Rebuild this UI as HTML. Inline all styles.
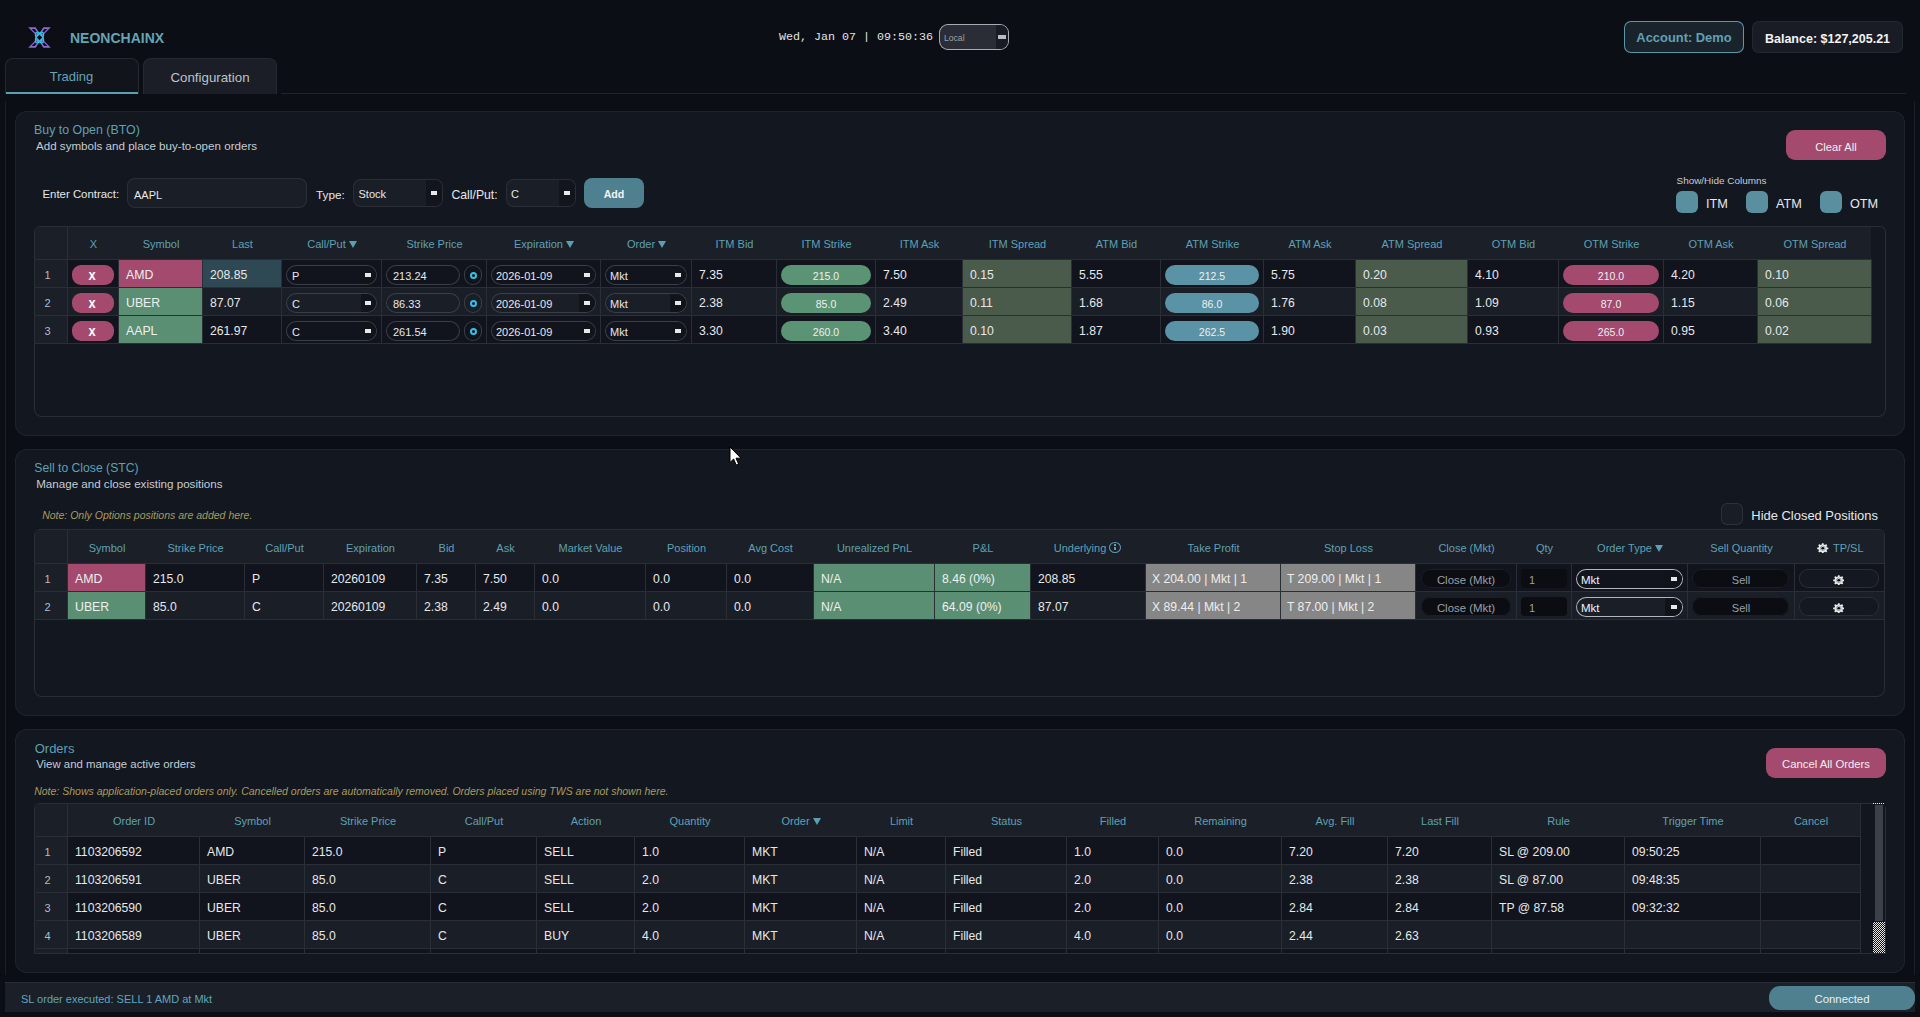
<!DOCTYPE html><html><head><meta charset="utf-8"><style>
html,body{margin:0;padding:0;}
body{width:1920px;height:1017px;overflow:hidden;position:relative;background:#0b0e14;font-family:'Liberation Sans', sans-serif;}
div{position:absolute;box-sizing:border-box;}
.t{line-height:1;white-space:pre;}
</style></head><body>
<svg style="position:absolute;left:28px;top:27px" width="23" height="21" viewBox="0 0 23 21">
<g fill="#8a6cd0" fill-rule="evenodd">
<path d="M0.2 0.3 L7.6 0.3 L12.2 7.2 L9.6 9.8 Z M3.6 1.9 L6.7 1.9 L9.4 5.6 L8.4 6.8 Z"/>
<path d="M22.8 0.3 L15.4 0.3 L10.8 7.2 L13.4 9.8 Z M19.4 1.9 L16.3 1.9 L13.6 5.6 L14.6 6.8 Z"/>
<path d="M0.2 20.7 L7.6 20.7 L12.2 13.8 L9.6 11.2 Z M3.6 19.1 L6.7 19.1 L9.4 15.4 L8.4 14.2 Z"/>
<path d="M22.8 20.7 L15.4 20.7 L10.8 13.8 L13.4 11.2 Z M19.4 19.1 L16.3 19.1 L13.6 15.4 L14.6 14.2 Z"/>
</g>
<g fill="none" stroke="#2ec4e0" stroke-width="1.4">
<ellipse cx="11.5" cy="10.5" rx="2.9" ry="6.0" transform="rotate(33 11.5 10.5)"/>
<ellipse cx="11.5" cy="10.5" rx="2.9" ry="6.0" transform="rotate(-33 11.5 10.5)"/>
</g></svg>
<div class="t" style="top:30.94px;font-size:14px;color:#64a4b4;font-weight:bold;left:70.00px;">NEONCHAINX</div>
<div class="t" style="top:32.28px;font-size:11.67px;color:#e2e4e6;font-family:'Liberation Mono', monospace;left:779.00px;">Wed, Jan 07 | 09:50:36</div>
<div style="left:939px;top:24px;width:70px;height:26px;background:#2a2d35;box-shadow:inset 0 0 0 1px #a8acb4;border-radius:9px;"></div>
<div style="left:996px;top:25px;width:12px;height:24px;background:#181b22;border-radius:0 8px 8px 0;"></div>
<div style="left:998px;top:35px;width:8px;height:4px;background:#b8bcc4;"></div>
<div class="t" style="top:34.07px;font-size:8.6px;color:#9aa2ac;left:944.00px;">Local</div>
<div style="left:1624px;top:21px;width:120px;height:32px;background:#18232b;box-shadow:inset 0 0 0 1px #5b98a8;border-radius:7px;"></div>
<div class="t" style="top:32.30px;font-size:12.9px;color:#62a0b3;font-weight:bold;left:1384.00px;width:600px;text-align:center;">Account: Demo</div>
<div style="left:1752px;top:21px;width:151px;height:32px;background:#191c25;box-shadow:inset 0 0 0 1px #23272f;border-radius:7px;"></div>
<div class="t" style="top:32.50px;font-size:12.5px;color:#f2f2f2;font-weight:bold;left:1527.50px;width:600px;text-align:center;">Balance: $127,205.21</div>
<div style="left:5px;top:58px;width:134px;height:36px;background:#11141b;border-radius:8px 8px 0 0;border:1px solid #252932;border-bottom:none;"></div>
<div style="left:6px;top:92px;width:132px;height:2px;background:#5b9fb4;"></div>
<div class="t" style="top:69.75px;font-size:13px;color:#66a3b6;left:-228.50px;width:600px;text-align:center;">Trading</div>
<div style="left:143px;top:58px;width:134px;height:36px;background:#1b1e27;border-radius:8px 8px 0 0;border:1px solid #252932;border-bottom:none;"></div>
<div class="t" style="top:71.40px;font-size:13.3px;color:#b9c4cc;left:-90.00px;width:600px;text-align:center;">Configuration</div>
<div style="left:281px;top:93px;width:1625px;height:1px;background:#20242c;"></div>
<div style="left:5px;top:101px;width:1px;height:874px;background:#1a1e26;"></div>
<div style="left:1914px;top:101px;width:1px;height:874px;background:#1a1e26;"></div>
<div style="left:15px;top:111px;width:1890px;height:325px;background:#131720;box-shadow:inset 0 0 0 1px #1f232c;border-radius:12px;"></div>
<div class="t" style="top:124.15px;font-size:12.4px;color:#5ea1b3;left:34.00px;">Buy to Open (BTO)</div>
<div class="t" style="top:140.35px;font-size:11.6px;color:#c4ccd4;left:36.00px;">Add symbols and place buy-to-open orders</div>
<div style="left:1786px;top:130px;width:100px;height:30px;background:#a34a6e;border-radius:9px;"></div>
<div class="t" style="top:141.51px;font-size:11.1px;color:#f4eef0;left:1536.00px;width:600px;text-align:center;">Clear All</div>
<div class="t" style="top:176.39px;font-size:9.95px;color:#c4ccd4;left:1676.50px;">Show/Hide Columns</div>
<div style="left:1676px;top:191px;width:22px;height:22px;background:#5a8fa0;border-radius:6px;"></div>
<div class="t" style="top:197.80px;font-size:12.7px;color:#e6e8ea;left:1706.00px;">ITM</div>
<div style="left:1746px;top:191px;width:22px;height:22px;background:#5a8fa0;border-radius:6px;"></div>
<div class="t" style="top:197.80px;font-size:12.7px;color:#e6e8ea;left:1776.00px;">ATM</div>
<div style="left:1820px;top:191px;width:22px;height:22px;background:#5a8fa0;border-radius:6px;"></div>
<div class="t" style="top:197.80px;font-size:12.7px;color:#e6e8ea;left:1850.00px;">OTM</div>
<div class="t" style="top:189.35px;font-size:11.4px;color:#e6e8ea;left:42.50px;">Enter Contract:</div>
<div style="left:127px;top:178px;width:180px;height:30px;background:#1a1e27;box-shadow:inset 0 0 0 1px #2a2e37;border-radius:8px;"></div>
<div class="t" style="top:189.56px;font-size:11px;color:#e6e8ea;left:134.00px;">AAPL</div>
<div class="t" style="top:189.55px;font-size:11.8px;color:#e6e8ea;left:316.00px;">Type:</div>
<div style="left:353px;top:179px;width:90px;height:28px;background:#1a1e27;box-shadow:inset 0 0 0 1px #2a2e37;border-radius:8px;"></div>
<div style="left:426px;top:180px;width:16px;height:26px;background:#12151c;border-radius:0 7px 7px 0;"></div>
<div style="left:431px;top:191px;width:6px;height:4px;background:#e6e8ea;"></div>
<div class="t" style="top:188.86px;font-size:11px;color:#e6e8ea;left:358.50px;">Stock</div>
<div class="t" style="top:189.35px;font-size:12.2px;color:#e6e8ea;left:451.50px;">Call/Put:</div>
<div style="left:506px;top:179px;width:70px;height:28px;background:#1a1e27;box-shadow:inset 0 0 0 1px #2a2e37;border-radius:8px;"></div>
<div style="left:559px;top:180px;width:16px;height:26px;background:#12151c;border-radius:0 7px 7px 0;"></div>
<div style="left:564px;top:191px;width:6px;height:4px;background:#e6e8ea;"></div>
<div class="t" style="top:188.86px;font-size:11px;color:#e6e8ea;left:511.00px;">C</div>
<div style="left:584px;top:178px;width:60px;height:30px;background:#4e808f;border-radius:8px;"></div>
<div class="t" style="top:188.56px;font-size:10.6px;color:#f2f4f6;font-weight:bold;left:314.00px;width:600px;text-align:center;">Add</div>
<div style="left:34px;top:226px;width:1852px;height:191px;background:#131720;box-shadow:inset 0 0 0 1px #2a2e37;border-radius:6px 6px 8px 8px;"></div>
<div style="left:68px;top:227px;width:1803px;height:32px;background:#1b1f28;"></div>
<div style="left:35px;top:227px;width:32px;height:116px;background:#1b1f28;"></div>
<div style="left:68px;top:260px;width:1803px;height:27px;background:#11141d;"></div>
<div style="left:68px;top:288px;width:1803px;height:27px;background:#1a1e27;"></div>
<div style="left:68px;top:316px;width:1803px;height:27px;background:#11141d;"></div>
<div style="left:35px;top:259px;width:1836px;height:1px;background:#2a2e37;"></div>
<div style="left:35px;top:287px;width:1836px;height:1px;background:#2a2e37;"></div>
<div style="left:35px;top:315px;width:1836px;height:1px;background:#2a2e37;"></div>
<div style="left:35px;top:343px;width:1836px;height:1px;background:#2a2e37;"></div>
<div style="left:67px;top:227px;width:1px;height:116px;background:#2a2e37;"></div>
<div style="left:118px;top:259px;width:1px;height:84px;background:#2a2e37;"></div>
<div style="left:202px;top:259px;width:1px;height:84px;background:#2a2e37;"></div>
<div style="left:281px;top:259px;width:1px;height:84px;background:#2a2e37;"></div>
<div style="left:381px;top:259px;width:1px;height:84px;background:#2a2e37;"></div>
<div style="left:486px;top:259px;width:1px;height:84px;background:#2a2e37;"></div>
<div style="left:600px;top:259px;width:1px;height:84px;background:#2a2e37;"></div>
<div style="left:691px;top:259px;width:1px;height:84px;background:#2a2e37;"></div>
<div style="left:776px;top:259px;width:1px;height:84px;background:#2a2e37;"></div>
<div style="left:875px;top:259px;width:1px;height:84px;background:#2a2e37;"></div>
<div style="left:962px;top:259px;width:1px;height:84px;background:#2a2e37;"></div>
<div style="left:1071px;top:259px;width:1px;height:84px;background:#2a2e37;"></div>
<div style="left:1160px;top:259px;width:1px;height:84px;background:#2a2e37;"></div>
<div style="left:1263px;top:259px;width:1px;height:84px;background:#2a2e37;"></div>
<div style="left:1355px;top:259px;width:1px;height:84px;background:#2a2e37;"></div>
<div style="left:1467px;top:259px;width:1px;height:84px;background:#2a2e37;"></div>
<div style="left:1558px;top:259px;width:1px;height:84px;background:#2a2e37;"></div>
<div style="left:1663px;top:259px;width:1px;height:84px;background:#2a2e37;"></div>
<div style="left:1757px;top:259px;width:1px;height:84px;background:#2a2e37;"></div>
<div style="left:1871px;top:259px;width:1px;height:84px;background:#2a2e37;"></div>
<div class="t" style="top:238.76px;font-size:11px;color:#5ea1b3;left:-206.50px;width:600px;text-align:center;">X</div>
<div class="t" style="top:238.76px;font-size:11px;color:#5ea1b3;left:-139.00px;width:600px;text-align:center;">Symbol</div>
<div class="t" style="top:238.76px;font-size:11px;color:#5ea1b3;left:-57.50px;width:600px;text-align:center;">Last</div>
<div class="t" style="top:238.76px;font-size:11px;color:#5ea1b3;left:134.50px;width:600px;text-align:center;">Strike Price</div>
<div class="t" style="top:238.76px;font-size:11px;color:#5ea1b3;left:434.50px;width:600px;text-align:center;">ITM Bid</div>
<div class="t" style="top:238.76px;font-size:11px;color:#5ea1b3;left:526.50px;width:600px;text-align:center;">ITM Strike</div>
<div class="t" style="top:238.76px;font-size:11px;color:#5ea1b3;left:619.50px;width:600px;text-align:center;">ITM Ask</div>
<div class="t" style="top:238.76px;font-size:11px;color:#5ea1b3;left:717.50px;width:600px;text-align:center;">ITM Spread</div>
<div class="t" style="top:238.76px;font-size:11px;color:#5ea1b3;left:816.50px;width:600px;text-align:center;">ATM Bid</div>
<div class="t" style="top:238.76px;font-size:11px;color:#5ea1b3;left:912.50px;width:600px;text-align:center;">ATM Strike</div>
<div class="t" style="top:238.76px;font-size:11px;color:#5ea1b3;left:1010.00px;width:600px;text-align:center;">ATM Ask</div>
<div class="t" style="top:238.76px;font-size:11px;color:#5ea1b3;left:1112.00px;width:600px;text-align:center;">ATM Spread</div>
<div class="t" style="top:238.76px;font-size:11px;color:#5ea1b3;left:1213.50px;width:600px;text-align:center;">OTM Bid</div>
<div class="t" style="top:238.76px;font-size:11px;color:#5ea1b3;left:1311.50px;width:600px;text-align:center;">OTM Strike</div>
<div class="t" style="top:238.76px;font-size:11px;color:#5ea1b3;left:1411.00px;width:600px;text-align:center;">OTM Ask</div>
<div class="t" style="top:238.76px;font-size:11px;color:#5ea1b3;left:1515.00px;width:600px;text-align:center;">OTM Spread</div>
<div class="t" style="top:238.76px;font-size:11px;color:#5ea1b3;left:32.00px;width:600px;text-align:center;">Call/Put<span style="display:inline-block;width:0;height:0;border-left:4px solid transparent;border-right:4px solid transparent;border-top:7.5px solid #5b9fb4;margin-left:3px;vertical-align:0px"></span></div>
<div class="t" style="top:238.76px;font-size:11px;color:#5ea1b3;left:244.00px;width:600px;text-align:center;">Expiration<span style="display:inline-block;width:0;height:0;border-left:4px solid transparent;border-right:4px solid transparent;border-top:7.5px solid #5b9fb4;margin-left:3px;vertical-align:0px"></span></div>
<div class="t" style="top:238.76px;font-size:11px;color:#5ea1b3;left:346.50px;width:600px;text-align:center;">Order<span style="display:inline-block;width:0;height:0;border-left:4px solid transparent;border-right:4px solid transparent;border-top:7.5px solid #5b9fb4;margin-left:3px;vertical-align:0px"></span></div>
<div class="t" style="top:269.96px;font-size:11px;color:#b4bcc4;left:44.50px;">1</div>
<div style="left:72px;top:265px;width:42px;height:20px;background:#a34a6e;border-radius:9px;"></div>
<div class="t" style="top:267.54px;font-size:14px;color:#ffffff;font-weight:bold;left:-207.70px;width:600px;text-align:center;transform:scaleX(0.92);">x</div>
<div style="left:119px;top:260px;width:83px;height:27px;background:#a34a6e;"></div>
<div class="t" style="top:269.30px;font-size:12.3px;color:#eef0f0;left:126.00px;">AMD</div>
<div style="left:203px;top:260px;width:78px;height:27px;background:#2e4954;"></div>
<div class="t" style="top:269.35px;font-size:12.2px;color:#e6e8ea;left:210.00px;">208.85</div>
<div style="left:286px;top:265px;width:91px;height:20px;box-shadow:inset 0 0 0 1px #3a3e47;border-radius:10px;"></div>
<div style="left:361px;top:266px;width:15px;height:18px;background:#11141b;border-radius:0 9px 9px 0;"></div>
<div style="left:365px;top:273px;width:6px;height:4px;background:#e6e8ea;"></div>
<div class="t" style="top:270.86px;font-size:11px;color:#e6e8ea;left:292.00px;">P</div>
<div style="left:386px;top:265px;width:74px;height:20px;box-shadow:inset 0 0 0 1px #3a3e47;border-radius:10px;"></div>
<div class="t" style="top:270.76px;font-size:11px;color:#e6e8ea;left:393.00px;">213.24</div>
<div style="left:464px;top:265px;width:18px;height:20px;box-shadow:inset 0 0 0 1px #3a3e47;border-radius:9px;"></div>
<div style="left:469.5px;top:271.5px;width:7.0px;height:7.0px;border-radius:4px;border:2px solid #38c0e4;"></div>
<div style="left:491px;top:265px;width:105px;height:20px;box-shadow:inset 0 0 0 1px #3a3e47;border-radius:10px;"></div>
<div style="left:579px;top:266px;width:16px;height:18px;background:#11141b;border-radius:0 9px 9px 0;"></div>
<div style="left:584px;top:273px;width:6px;height:4px;background:#e6e8ea;"></div>
<div class="t" style="top:270.86px;font-size:11px;color:#e6e8ea;left:496.00px;">2026-01-09</div>
<div style="left:605px;top:265px;width:82px;height:20px;box-shadow:inset 0 0 0 1px #3a3e47;border-radius:10px;"></div>
<div style="left:670px;top:266px;width:16px;height:18px;background:#11141b;border-radius:0 9px 9px 0;"></div>
<div style="left:675px;top:273px;width:6px;height:4px;background:#e6e8ea;"></div>
<div class="t" style="top:270.86px;font-size:11px;color:#e6e8ea;left:610.00px;">Mkt</div>
<div class="t" style="top:269.35px;font-size:12.2px;color:#e6e8ea;left:699.00px;">7.35</div>
<div style="left:781px;top:265px;width:90px;height:20px;background:#5b9474;border-radius:10px;"></div>
<div class="t" style="top:270.91px;font-size:10.5px;color:#eef0f0;left:526.00px;width:600px;text-align:center;">215.0</div>
<div class="t" style="top:269.35px;font-size:12.2px;color:#e6e8ea;left:883.00px;">7.50</div>
<div style="left:963px;top:260px;width:108px;height:27px;background:#4a5a4b;"></div>
<div class="t" style="top:269.35px;font-size:12.2px;color:#e6e8ea;left:970.00px;">0.15</div>
<div class="t" style="top:269.35px;font-size:12.2px;color:#e6e8ea;left:1079.00px;">5.55</div>
<div style="left:1165px;top:265px;width:94px;height:20px;background:#5a93a5;border-radius:10px;"></div>
<div class="t" style="top:270.91px;font-size:10.5px;color:#eef0f0;left:912.00px;width:600px;text-align:center;">212.5</div>
<div class="t" style="top:269.35px;font-size:12.2px;color:#e6e8ea;left:1271.00px;">5.75</div>
<div style="left:1356px;top:260px;width:111px;height:27px;background:#4a5a4b;"></div>
<div class="t" style="top:269.35px;font-size:12.2px;color:#e6e8ea;left:1363.00px;">0.20</div>
<div class="t" style="top:269.35px;font-size:12.2px;color:#e6e8ea;left:1475.00px;">4.10</div>
<div style="left:1563px;top:265px;width:96px;height:20px;background:#a34a6e;border-radius:10px;"></div>
<div class="t" style="top:270.91px;font-size:10.5px;color:#eef0f0;left:1311.00px;width:600px;text-align:center;">210.0</div>
<div class="t" style="top:269.35px;font-size:12.2px;color:#e6e8ea;left:1671.00px;">4.20</div>
<div style="left:1758px;top:260px;width:113px;height:27px;background:#4a5a4b;"></div>
<div class="t" style="top:269.35px;font-size:12.2px;color:#e6e8ea;left:1765.00px;">0.10</div>
<div class="t" style="top:297.96px;font-size:11px;color:#b4bcc4;left:44.50px;">2</div>
<div style="left:72px;top:293px;width:42px;height:20px;background:#a34a6e;border-radius:9px;"></div>
<div class="t" style="top:295.54px;font-size:14px;color:#ffffff;font-weight:bold;left:-207.70px;width:600px;text-align:center;transform:scaleX(0.92);">x</div>
<div style="left:119px;top:288px;width:83px;height:27px;background:#5b8f73;"></div>
<div class="t" style="top:297.30px;font-size:12.3px;color:#eef0f0;left:126.00px;">UBER</div>
<div class="t" style="top:297.35px;font-size:12.2px;color:#e6e8ea;left:210.00px;">87.07</div>
<div style="left:286px;top:293px;width:91px;height:20px;box-shadow:inset 0 0 0 1px #3a3e47;border-radius:10px;"></div>
<div style="left:361px;top:294px;width:15px;height:18px;background:#11141b;border-radius:0 9px 9px 0;"></div>
<div style="left:365px;top:301px;width:6px;height:4px;background:#e6e8ea;"></div>
<div class="t" style="top:298.86px;font-size:11px;color:#e6e8ea;left:292.00px;">C</div>
<div style="left:386px;top:293px;width:74px;height:20px;box-shadow:inset 0 0 0 1px #3a3e47;border-radius:10px;"></div>
<div class="t" style="top:298.76px;font-size:11px;color:#e6e8ea;left:393.00px;">86.33</div>
<div style="left:464px;top:293px;width:18px;height:20px;box-shadow:inset 0 0 0 1px #3a3e47;border-radius:9px;"></div>
<div style="left:469.5px;top:299.5px;width:7.0px;height:7.0px;border-radius:4px;border:2px solid #38c0e4;"></div>
<div style="left:491px;top:293px;width:105px;height:20px;box-shadow:inset 0 0 0 1px #3a3e47;border-radius:10px;"></div>
<div style="left:579px;top:294px;width:16px;height:18px;background:#11141b;border-radius:0 9px 9px 0;"></div>
<div style="left:584px;top:301px;width:6px;height:4px;background:#e6e8ea;"></div>
<div class="t" style="top:298.86px;font-size:11px;color:#e6e8ea;left:496.00px;">2026-01-09</div>
<div style="left:605px;top:293px;width:82px;height:20px;box-shadow:inset 0 0 0 1px #3a3e47;border-radius:10px;"></div>
<div style="left:670px;top:294px;width:16px;height:18px;background:#11141b;border-radius:0 9px 9px 0;"></div>
<div style="left:675px;top:301px;width:6px;height:4px;background:#e6e8ea;"></div>
<div class="t" style="top:298.86px;font-size:11px;color:#e6e8ea;left:610.00px;">Mkt</div>
<div class="t" style="top:297.35px;font-size:12.2px;color:#e6e8ea;left:699.00px;">2.38</div>
<div style="left:781px;top:293px;width:90px;height:20px;background:#5b9474;border-radius:10px;"></div>
<div class="t" style="top:298.91px;font-size:10.5px;color:#eef0f0;left:526.00px;width:600px;text-align:center;">85.0</div>
<div class="t" style="top:297.35px;font-size:12.2px;color:#e6e8ea;left:883.00px;">2.49</div>
<div style="left:963px;top:288px;width:108px;height:27px;background:#4a5a4b;"></div>
<div class="t" style="top:297.35px;font-size:12.2px;color:#e6e8ea;left:970.00px;">0.11</div>
<div class="t" style="top:297.35px;font-size:12.2px;color:#e6e8ea;left:1079.00px;">1.68</div>
<div style="left:1165px;top:293px;width:94px;height:20px;background:#5a93a5;border-radius:10px;"></div>
<div class="t" style="top:298.91px;font-size:10.5px;color:#eef0f0;left:912.00px;width:600px;text-align:center;">86.0</div>
<div class="t" style="top:297.35px;font-size:12.2px;color:#e6e8ea;left:1271.00px;">1.76</div>
<div style="left:1356px;top:288px;width:111px;height:27px;background:#4a5a4b;"></div>
<div class="t" style="top:297.35px;font-size:12.2px;color:#e6e8ea;left:1363.00px;">0.08</div>
<div class="t" style="top:297.35px;font-size:12.2px;color:#e6e8ea;left:1475.00px;">1.09</div>
<div style="left:1563px;top:293px;width:96px;height:20px;background:#a34a6e;border-radius:10px;"></div>
<div class="t" style="top:298.91px;font-size:10.5px;color:#eef0f0;left:1311.00px;width:600px;text-align:center;">87.0</div>
<div class="t" style="top:297.35px;font-size:12.2px;color:#e6e8ea;left:1671.00px;">1.15</div>
<div style="left:1758px;top:288px;width:113px;height:27px;background:#4a5a4b;"></div>
<div class="t" style="top:297.35px;font-size:12.2px;color:#e6e8ea;left:1765.00px;">0.06</div>
<div class="t" style="top:325.96px;font-size:11px;color:#b4bcc4;left:44.50px;">3</div>
<div style="left:72px;top:321px;width:42px;height:20px;background:#a34a6e;border-radius:9px;"></div>
<div class="t" style="top:323.54px;font-size:14px;color:#ffffff;font-weight:bold;left:-207.70px;width:600px;text-align:center;transform:scaleX(0.92);">x</div>
<div style="left:119px;top:316px;width:83px;height:27px;background:#5b8f73;"></div>
<div class="t" style="top:325.30px;font-size:12.3px;color:#eef0f0;left:126.00px;">AAPL</div>
<div class="t" style="top:325.35px;font-size:12.2px;color:#e6e8ea;left:210.00px;">261.97</div>
<div style="left:286px;top:321px;width:91px;height:20px;box-shadow:inset 0 0 0 1px #3a3e47;border-radius:10px;"></div>
<div style="left:361px;top:322px;width:15px;height:18px;background:#11141b;border-radius:0 9px 9px 0;"></div>
<div style="left:365px;top:329px;width:6px;height:4px;background:#e6e8ea;"></div>
<div class="t" style="top:326.86px;font-size:11px;color:#e6e8ea;left:292.00px;">C</div>
<div style="left:386px;top:321px;width:74px;height:20px;box-shadow:inset 0 0 0 1px #3a3e47;border-radius:10px;"></div>
<div class="t" style="top:326.76px;font-size:11px;color:#e6e8ea;left:393.00px;">261.54</div>
<div style="left:464px;top:321px;width:18px;height:20px;box-shadow:inset 0 0 0 1px #3a3e47;border-radius:9px;"></div>
<div style="left:469.5px;top:327.5px;width:7.0px;height:7.0px;border-radius:4px;border:2px solid #38c0e4;"></div>
<div style="left:491px;top:321px;width:105px;height:20px;box-shadow:inset 0 0 0 1px #3a3e47;border-radius:10px;"></div>
<div style="left:579px;top:322px;width:16px;height:18px;background:#11141b;border-radius:0 9px 9px 0;"></div>
<div style="left:584px;top:329px;width:6px;height:4px;background:#e6e8ea;"></div>
<div class="t" style="top:326.86px;font-size:11px;color:#e6e8ea;left:496.00px;">2026-01-09</div>
<div style="left:605px;top:321px;width:82px;height:20px;box-shadow:inset 0 0 0 1px #3a3e47;border-radius:10px;"></div>
<div style="left:670px;top:322px;width:16px;height:18px;background:#11141b;border-radius:0 9px 9px 0;"></div>
<div style="left:675px;top:329px;width:6px;height:4px;background:#e6e8ea;"></div>
<div class="t" style="top:326.86px;font-size:11px;color:#e6e8ea;left:610.00px;">Mkt</div>
<div class="t" style="top:325.35px;font-size:12.2px;color:#e6e8ea;left:699.00px;">3.30</div>
<div style="left:781px;top:321px;width:90px;height:20px;background:#5b9474;border-radius:10px;"></div>
<div class="t" style="top:326.91px;font-size:10.5px;color:#eef0f0;left:526.00px;width:600px;text-align:center;">260.0</div>
<div class="t" style="top:325.35px;font-size:12.2px;color:#e6e8ea;left:883.00px;">3.40</div>
<div style="left:963px;top:316px;width:108px;height:27px;background:#4a5a4b;"></div>
<div class="t" style="top:325.35px;font-size:12.2px;color:#e6e8ea;left:970.00px;">0.10</div>
<div class="t" style="top:325.35px;font-size:12.2px;color:#e6e8ea;left:1079.00px;">1.87</div>
<div style="left:1165px;top:321px;width:94px;height:20px;background:#5a93a5;border-radius:10px;"></div>
<div class="t" style="top:326.91px;font-size:10.5px;color:#eef0f0;left:912.00px;width:600px;text-align:center;">262.5</div>
<div class="t" style="top:325.35px;font-size:12.2px;color:#e6e8ea;left:1271.00px;">1.90</div>
<div style="left:1356px;top:316px;width:111px;height:27px;background:#4a5a4b;"></div>
<div class="t" style="top:325.35px;font-size:12.2px;color:#e6e8ea;left:1363.00px;">0.03</div>
<div class="t" style="top:325.35px;font-size:12.2px;color:#e6e8ea;left:1475.00px;">0.93</div>
<div style="left:1563px;top:321px;width:96px;height:20px;background:#a34a6e;border-radius:10px;"></div>
<div class="t" style="top:326.91px;font-size:10.5px;color:#eef0f0;left:1311.00px;width:600px;text-align:center;">265.0</div>
<div class="t" style="top:325.35px;font-size:12.2px;color:#e6e8ea;left:1671.00px;">0.95</div>
<div style="left:1758px;top:316px;width:113px;height:27px;background:#4a5a4b;"></div>
<div class="t" style="top:325.35px;font-size:12.2px;color:#e6e8ea;left:1765.00px;">0.02</div>
<div style="left:15px;top:449px;width:1890px;height:267px;background:#131720;box-shadow:inset 0 0 0 1px #1f232c;border-radius:12px;"></div>
<div class="t" style="top:462.35px;font-size:12.2px;color:#5ea1b3;left:34.30px;">Sell to Close (STC)</div>
<div class="t" style="top:478.35px;font-size:11.6px;color:#c4ccd4;left:36.20px;">Manage and close existing positions</div>
<div class="t" style="top:509.91px;font-size:10.5px;color:#a99b5c;font-style:italic;left:42.20px;">Note: Only Options positions are added here.</div>
<div style="left:1721px;top:503px;width:22px;height:22px;background:#191d26;box-shadow:inset 0 0 0 1px #2c3039;border-radius:6px;"></div>
<div class="t" style="top:509.87px;font-size:12.95px;color:#e6e8ea;left:1751.30px;">Hide Closed Positions</div>
<div style="left:34px;top:529px;width:1851px;height:168px;background:#131720;box-shadow:inset 0 0 0 1px #2a2e37;border-radius:6px 6px 8px 8px;"></div>
<div style="left:68px;top:530px;width:1816px;height:33px;background:#1b1f28;"></div>
<div style="left:35px;top:530px;width:32px;height:89px;background:#1b1f28;"></div>
<div style="left:68px;top:564px;width:1816px;height:27px;background:#11141d;"></div>
<div style="left:68px;top:592px;width:1816px;height:27px;background:#1a1e27;"></div>
<div style="left:35px;top:563px;width:1849px;height:1px;background:#2a2e37;"></div>
<div style="left:35px;top:591px;width:1849px;height:1px;background:#2a2e37;"></div>
<div style="left:35px;top:619px;width:1849px;height:1px;background:#2a2e37;"></div>
<div style="left:67px;top:530px;width:1px;height:89px;background:#2a2e37;"></div>
<div style="left:145px;top:563px;width:1px;height:56px;background:#2a2e37;"></div>
<div style="left:244px;top:563px;width:1px;height:56px;background:#2a2e37;"></div>
<div style="left:323px;top:563px;width:1px;height:56px;background:#2a2e37;"></div>
<div style="left:416px;top:563px;width:1px;height:56px;background:#2a2e37;"></div>
<div style="left:475px;top:563px;width:1px;height:56px;background:#2a2e37;"></div>
<div style="left:534px;top:563px;width:1px;height:56px;background:#2a2e37;"></div>
<div style="left:645px;top:563px;width:1px;height:56px;background:#2a2e37;"></div>
<div style="left:726px;top:563px;width:1px;height:56px;background:#2a2e37;"></div>
<div style="left:813px;top:563px;width:1px;height:56px;background:#2a2e37;"></div>
<div style="left:934px;top:563px;width:1px;height:56px;background:#2a2e37;"></div>
<div style="left:1030px;top:563px;width:1px;height:56px;background:#2a2e37;"></div>
<div style="left:1145px;top:563px;width:1px;height:56px;background:#2a2e37;"></div>
<div style="left:1280px;top:563px;width:1px;height:56px;background:#2a2e37;"></div>
<div style="left:1415px;top:563px;width:1px;height:56px;background:#2a2e37;"></div>
<div style="left:1516px;top:563px;width:1px;height:56px;background:#2a2e37;"></div>
<div style="left:1571px;top:563px;width:1px;height:56px;background:#2a2e37;"></div>
<div style="left:1687px;top:563px;width:1px;height:56px;background:#2a2e37;"></div>
<div style="left:1794px;top:563px;width:1px;height:56px;background:#2a2e37;"></div>
<div style="left:1884px;top:563px;width:1px;height:56px;background:#2a2e37;"></div>
<div class="t" style="top:542.66px;font-size:11px;color:#5ea1b3;left:-193.00px;width:600px;text-align:center;">Symbol</div>
<div class="t" style="top:542.66px;font-size:11px;color:#5ea1b3;left:-104.50px;width:600px;text-align:center;">Strike Price</div>
<div class="t" style="top:542.66px;font-size:11px;color:#5ea1b3;left:-15.50px;width:600px;text-align:center;">Call/Put</div>
<div class="t" style="top:542.66px;font-size:11px;color:#5ea1b3;left:70.50px;width:600px;text-align:center;">Expiration</div>
<div class="t" style="top:542.66px;font-size:11px;color:#5ea1b3;left:146.50px;width:600px;text-align:center;">Bid</div>
<div class="t" style="top:542.66px;font-size:11px;color:#5ea1b3;left:205.50px;width:600px;text-align:center;">Ask</div>
<div class="t" style="top:542.66px;font-size:11px;color:#5ea1b3;left:290.50px;width:600px;text-align:center;">Market Value</div>
<div class="t" style="top:542.66px;font-size:11px;color:#5ea1b3;left:386.50px;width:600px;text-align:center;">Position</div>
<div class="t" style="top:542.66px;font-size:11px;color:#5ea1b3;left:470.50px;width:600px;text-align:center;">Avg Cost</div>
<div class="t" style="top:542.66px;font-size:11px;color:#5ea1b3;left:574.50px;width:600px;text-align:center;">Unrealized PnL</div>
<div class="t" style="top:542.66px;font-size:11px;color:#5ea1b3;left:683.00px;width:600px;text-align:center;">P&amp;L</div>
<div class="t" style="top:542.66px;font-size:11px;color:#5ea1b3;left:913.50px;width:600px;text-align:center;">Take Profit</div>
<div class="t" style="top:542.66px;font-size:11px;color:#5ea1b3;left:1048.50px;width:600px;text-align:center;">Stop Loss</div>
<div class="t" style="top:542.66px;font-size:11px;color:#5ea1b3;left:1166.50px;width:600px;text-align:center;">Close (Mkt)</div>
<div class="t" style="top:542.66px;font-size:11px;color:#5ea1b3;left:1244.50px;width:600px;text-align:center;">Qty</div>
<div class="t" style="top:542.66px;font-size:11px;color:#5ea1b3;left:1441.50px;width:600px;text-align:center;">Sell Quantity</div>
<div class="t" style="top:541.86px;font-size:11px;color:#5ea1b3;left:787.50px;width:600px;text-align:center;">Underlying<span style="display:inline-block;width:12px;height:11px;border:1.6px solid #5b9fb4;border-radius:50%;margin-left:3px;vertical-align:-1px;box-sizing:border-box;position:relative"><span style="position:absolute;left:3.6px;top:1.6px;width:1.8px;height:1.6px;background:#5b9fb4"></span><span style="position:absolute;left:3.6px;top:3.8px;width:1.8px;height:3.6px;background:#5b9fb4"></span></span></div>
<div class="t" style="top:542.66px;font-size:11px;color:#5ea1b3;left:1330.00px;width:600px;text-align:center;">Order Type<span style="display:inline-block;width:0;height:0;border-left:4px solid transparent;border-right:4px solid transparent;border-top:7.5px solid #5b9fb4;margin-left:3px;vertical-align:0px"></span></div>
<svg style="position:absolute;left:1817px;top:542.5px" width="11.5" height="10.6" viewBox="0 0 12 12" preserveAspectRatio="none"><g fill="#e8eaec"><rect x="5" y="0.2" width="2" height="3" rx="0.3" transform="rotate(0 6 6)"/><rect x="5" y="0.2" width="2" height="3" rx="0.3" transform="rotate(45 6 6)"/><rect x="5" y="0.2" width="2" height="3" rx="0.3" transform="rotate(90 6 6)"/><rect x="5" y="0.2" width="2" height="3" rx="0.3" transform="rotate(135 6 6)"/><rect x="5" y="0.2" width="2" height="3" rx="0.3" transform="rotate(180 6 6)"/><rect x="5" y="0.2" width="2" height="3" rx="0.3" transform="rotate(225 6 6)"/><rect x="5" y="0.2" width="2" height="3" rx="0.3" transform="rotate(270 6 6)"/><rect x="5" y="0.2" width="2" height="3" rx="0.3" transform="rotate(315 6 6)"/><circle cx="6" cy="6" r="4.4"/></g><circle cx="6" cy="6" r="2.5" fill="none" stroke="#8e9296" stroke-width="0.9"/><circle cx="6" cy="6" r="1.5" fill="#0a0a0a"/></svg>
<div class="t" style="top:542.66px;font-size:11px;color:#5ea1b3;left:1833.00px;">TP/SL</div>
<div class="t" style="top:573.96px;font-size:11px;color:#b4bcc4;left:44.50px;">1</div>
<div style="left:68px;top:564px;width:77px;height:27px;background:#a34a6e;"></div>
<div class="t" style="top:573.30px;font-size:12.3px;color:#eef0f0;left:75.00px;">AMD</div>
<div class="t" style="top:573.35px;font-size:12.2px;color:#e6e8ea;left:153.00px;">215.0</div>
<div class="t" style="top:573.35px;font-size:12.2px;color:#e6e8ea;left:252.00px;">P</div>
<div class="t" style="top:573.35px;font-size:12.2px;color:#e6e8ea;left:331.00px;">20260109</div>
<div class="t" style="top:573.35px;font-size:12.2px;color:#e6e8ea;left:424.00px;">7.35</div>
<div class="t" style="top:573.35px;font-size:12.2px;color:#e6e8ea;left:483.00px;">7.50</div>
<div class="t" style="top:573.35px;font-size:12.2px;color:#e6e8ea;left:542.00px;">0.0</div>
<div class="t" style="top:573.35px;font-size:12.2px;color:#e6e8ea;left:653.00px;">0.0</div>
<div class="t" style="top:573.35px;font-size:12.2px;color:#e6e8ea;left:734.00px;">0.0</div>
<div style="left:814px;top:564px;width:120px;height:27px;background:#5b8f73;"></div>
<div class="t" style="top:573.35px;font-size:12.2px;color:#eef0f0;left:821.00px;">N/A</div>
<div style="left:935px;top:564px;width:95px;height:27px;background:#5b8f73;"></div>
<div class="t" style="top:573.35px;font-size:12.2px;color:#eef0f0;left:942.00px;">8.46 (0%)</div>
<div class="t" style="top:573.35px;font-size:12.2px;color:#e6e8ea;left:1038.00px;">208.85</div>
<div style="left:1146px;top:564px;width:134px;height:27px;background:#868686;"></div>
<div class="t" style="top:573.35px;font-size:12.2px;color:#eceeee;left:1152.00px;">X 204.00 | Mkt | 1</div>
<div style="left:1281px;top:564px;width:134px;height:27px;background:#868686;"></div>
<div class="t" style="top:573.35px;font-size:12.2px;color:#eceeee;left:1287.00px;">T 209.00 | Mkt | 1</div>
<div style="left:1421px;top:569px;width:90px;height:19px;background:#0b0d12;box-shadow:inset 0 0 0 1px #1a1e26;border-radius:9px;"></div>
<div class="t" style="top:574.75px;font-size:11.4px;color:#9aa0a8;left:1166.00px;width:600px;text-align:center;">Close (Mkt)</div>
<div style="left:1521px;top:569px;width:46px;height:19px;background:#0b0d12;border-radius:4px;"></div>
<div class="t" style="top:575.16px;font-size:11px;color:#9aa0a8;left:1529.00px;">1</div>
<div style="left:1576px;top:569px;width:107px;height:20px;box-shadow:inset 0 0 0 1px #b0b4bc;border-radius:10px;"></div>
<div style="left:1665px;top:570px;width:17px;height:18px;background:#10131a;border-radius:0 9px 9px 0;"></div>
<div style="left:1671px;top:577px;width:6px;height:4px;background:#e6e8ea;"></div>
<div class="t" style="top:574.60px;font-size:11.5px;color:#f2f4f6;left:1581.00px;">Mkt</div>
<div style="left:1692px;top:569px;width:97px;height:19px;background:#0b0d12;box-shadow:inset 0 0 0 1px #1a1e26;border-radius:9px;"></div>
<div class="t" style="top:575.16px;font-size:11px;color:#9aa0a8;left:1441.00px;width:600px;text-align:center;">Sell</div>
<div style="left:1799px;top:569px;width:80px;height:19px;background:#141820;box-shadow:inset 0 0 0 1px #2a2e37;border-radius:9px;"></div>
<svg style="position:absolute;left:1832.5px;top:574.5px" width="11.5" height="10.6" viewBox="0 0 12 12" preserveAspectRatio="none"><g fill="#e6e8ea"><rect x="5" y="0.2" width="2" height="3" rx="0.3" transform="rotate(0 6 6)"/><rect x="5" y="0.2" width="2" height="3" rx="0.3" transform="rotate(45 6 6)"/><rect x="5" y="0.2" width="2" height="3" rx="0.3" transform="rotate(90 6 6)"/><rect x="5" y="0.2" width="2" height="3" rx="0.3" transform="rotate(135 6 6)"/><rect x="5" y="0.2" width="2" height="3" rx="0.3" transform="rotate(180 6 6)"/><rect x="5" y="0.2" width="2" height="3" rx="0.3" transform="rotate(225 6 6)"/><rect x="5" y="0.2" width="2" height="3" rx="0.3" transform="rotate(270 6 6)"/><rect x="5" y="0.2" width="2" height="3" rx="0.3" transform="rotate(315 6 6)"/><circle cx="6" cy="6" r="4.4"/></g><circle cx="6" cy="6" r="2.5" fill="none" stroke="#8e9296" stroke-width="0.9"/><circle cx="6" cy="6" r="1.5" fill="#0a0a0a"/></svg>
<div class="t" style="top:601.96px;font-size:11px;color:#b4bcc4;left:44.50px;">2</div>
<div style="left:68px;top:592px;width:77px;height:27px;background:#5b8f73;"></div>
<div class="t" style="top:601.30px;font-size:12.3px;color:#eef0f0;left:75.00px;">UBER</div>
<div class="t" style="top:601.35px;font-size:12.2px;color:#e6e8ea;left:153.00px;">85.0</div>
<div class="t" style="top:601.35px;font-size:12.2px;color:#e6e8ea;left:252.00px;">C</div>
<div class="t" style="top:601.35px;font-size:12.2px;color:#e6e8ea;left:331.00px;">20260109</div>
<div class="t" style="top:601.35px;font-size:12.2px;color:#e6e8ea;left:424.00px;">2.38</div>
<div class="t" style="top:601.35px;font-size:12.2px;color:#e6e8ea;left:483.00px;">2.49</div>
<div class="t" style="top:601.35px;font-size:12.2px;color:#e6e8ea;left:542.00px;">0.0</div>
<div class="t" style="top:601.35px;font-size:12.2px;color:#e6e8ea;left:653.00px;">0.0</div>
<div class="t" style="top:601.35px;font-size:12.2px;color:#e6e8ea;left:734.00px;">0.0</div>
<div style="left:814px;top:592px;width:120px;height:27px;background:#5b8f73;"></div>
<div class="t" style="top:601.35px;font-size:12.2px;color:#eef0f0;left:821.00px;">N/A</div>
<div style="left:935px;top:592px;width:95px;height:27px;background:#5b8f73;"></div>
<div class="t" style="top:601.35px;font-size:12.2px;color:#eef0f0;left:942.00px;">64.09 (0%)</div>
<div class="t" style="top:601.35px;font-size:12.2px;color:#e6e8ea;left:1038.00px;">87.07</div>
<div style="left:1146px;top:592px;width:134px;height:27px;background:#868686;"></div>
<div class="t" style="top:601.35px;font-size:12.2px;color:#eceeee;left:1152.00px;">X 89.44 | Mkt | 2</div>
<div style="left:1281px;top:592px;width:134px;height:27px;background:#868686;"></div>
<div class="t" style="top:601.35px;font-size:12.2px;color:#eceeee;left:1287.00px;">T 87.00 | Mkt | 2</div>
<div style="left:1421px;top:597px;width:90px;height:19px;background:#0b0d12;box-shadow:inset 0 0 0 1px #1a1e26;border-radius:9px;"></div>
<div class="t" style="top:602.75px;font-size:11.4px;color:#9aa0a8;left:1166.00px;width:600px;text-align:center;">Close (Mkt)</div>
<div style="left:1521px;top:597px;width:46px;height:19px;background:#0b0d12;border-radius:4px;"></div>
<div class="t" style="top:603.16px;font-size:11px;color:#9aa0a8;left:1529.00px;">1</div>
<div style="left:1576px;top:597px;width:107px;height:20px;box-shadow:inset 0 0 0 1px #b0b4bc;border-radius:10px;"></div>
<div style="left:1665px;top:598px;width:17px;height:18px;background:#10131a;border-radius:0 9px 9px 0;"></div>
<div style="left:1671px;top:605px;width:6px;height:4px;background:#e6e8ea;"></div>
<div class="t" style="top:602.60px;font-size:11.5px;color:#f2f4f6;left:1581.00px;">Mkt</div>
<div style="left:1692px;top:597px;width:97px;height:19px;background:#0b0d12;box-shadow:inset 0 0 0 1px #1a1e26;border-radius:9px;"></div>
<div class="t" style="top:603.16px;font-size:11px;color:#9aa0a8;left:1441.00px;width:600px;text-align:center;">Sell</div>
<div style="left:1799px;top:597px;width:80px;height:19px;background:#141820;box-shadow:inset 0 0 0 1px #2a2e37;border-radius:9px;"></div>
<svg style="position:absolute;left:1832.5px;top:602.5px" width="11.5" height="10.6" viewBox="0 0 12 12" preserveAspectRatio="none"><g fill="#e6e8ea"><rect x="5" y="0.2" width="2" height="3" rx="0.3" transform="rotate(0 6 6)"/><rect x="5" y="0.2" width="2" height="3" rx="0.3" transform="rotate(45 6 6)"/><rect x="5" y="0.2" width="2" height="3" rx="0.3" transform="rotate(90 6 6)"/><rect x="5" y="0.2" width="2" height="3" rx="0.3" transform="rotate(135 6 6)"/><rect x="5" y="0.2" width="2" height="3" rx="0.3" transform="rotate(180 6 6)"/><rect x="5" y="0.2" width="2" height="3" rx="0.3" transform="rotate(225 6 6)"/><rect x="5" y="0.2" width="2" height="3" rx="0.3" transform="rotate(270 6 6)"/><rect x="5" y="0.2" width="2" height="3" rx="0.3" transform="rotate(315 6 6)"/><circle cx="6" cy="6" r="4.4"/></g><circle cx="6" cy="6" r="2.5" fill="none" stroke="#8e9296" stroke-width="0.9"/><circle cx="6" cy="6" r="1.5" fill="#0a0a0a"/></svg>
<div style="left:15px;top:729px;width:1890px;height:244px;background:#131720;box-shadow:inset 0 0 0 1px #1f232c;border-radius:12px;"></div>
<div class="t" style="top:742.05px;font-size:13.0px;color:#5ea1b3;left:34.70px;">Orders</div>
<div class="t" style="top:759.25px;font-size:11.4px;color:#c4ccd4;left:36.20px;">View and manage active orders</div>
<div class="t" style="top:785.91px;font-size:10.5px;color:#a99b5c;font-style:italic;left:34.20px;">Note: Shows application-placed orders only. Cancelled orders are automatically removed. Orders placed using TWS are not shown here.</div>
<div style="left:1766px;top:748px;width:120px;height:30px;background:#a34a6e;border-radius:9px;"></div>
<div class="t" style="top:759.20px;font-size:11.3px;color:#f4eef0;left:1526.00px;width:600px;text-align:center;">Cancel All Orders</div>
<div style="left:34px;top:803px;width:1852px;height:151px;background:#131720;box-shadow:inset 0 0 0 1px #2a2e37;border-radius:6px 6px 0 0;border-bottom:none;"></div>
<div style="left:1861px;top:804px;width:24px;height:149px;background:#12161e;"></div>
<div style="left:36px;top:804px;width:1824px;height:32px;background:#1b1f28;"></div>
<div style="left:35px;top:804px;width:32px;height:150px;background:#1b1f28;"></div>
<div style="left:68px;top:837px;width:1792px;height:27px;background:#11141d;"></div>
<div style="left:68px;top:865px;width:1792px;height:27px;background:#1a1e27;"></div>
<div style="left:68px;top:893px;width:1792px;height:27px;background:#11141d;"></div>
<div style="left:68px;top:921px;width:1792px;height:27px;background:#1a1e27;"></div>
<div style="left:68px;top:949px;width:1792px;height:5px;background:#11141d;"></div>
<div style="left:36px;top:836px;width:1824px;height:1px;background:#2a2e37;"></div>
<div style="left:36px;top:864px;width:1824px;height:1px;background:#2a2e37;"></div>
<div style="left:36px;top:892px;width:1824px;height:1px;background:#2a2e37;"></div>
<div style="left:36px;top:920px;width:1824px;height:1px;background:#2a2e37;"></div>
<div style="left:36px;top:948px;width:1824px;height:1px;background:#2a2e37;"></div>
<div style="left:36px;top:953px;width:1850px;height:1px;background:#2a2e37;"></div>
<div style="left:67px;top:804px;width:1px;height:150px;background:#2a2e37;"></div>
<div style="left:199px;top:836px;width:1px;height:118px;background:#2a2e37;"></div>
<div style="left:304px;top:836px;width:1px;height:118px;background:#2a2e37;"></div>
<div style="left:430px;top:836px;width:1px;height:118px;background:#2a2e37;"></div>
<div style="left:536px;top:836px;width:1px;height:118px;background:#2a2e37;"></div>
<div style="left:634px;top:836px;width:1px;height:118px;background:#2a2e37;"></div>
<div style="left:744px;top:836px;width:1px;height:118px;background:#2a2e37;"></div>
<div style="left:856px;top:836px;width:1px;height:118px;background:#2a2e37;"></div>
<div style="left:945px;top:836px;width:1px;height:118px;background:#2a2e37;"></div>
<div style="left:1066px;top:836px;width:1px;height:118px;background:#2a2e37;"></div>
<div style="left:1158px;top:836px;width:1px;height:118px;background:#2a2e37;"></div>
<div style="left:1281px;top:836px;width:1px;height:118px;background:#2a2e37;"></div>
<div style="left:1387px;top:836px;width:1px;height:118px;background:#2a2e37;"></div>
<div style="left:1491px;top:836px;width:1px;height:118px;background:#2a2e37;"></div>
<div style="left:1624px;top:836px;width:1px;height:118px;background:#2a2e37;"></div>
<div style="left:1760px;top:836px;width:1px;height:118px;background:#2a2e37;"></div>
<div style="left:1860px;top:836px;width:1px;height:118px;background:#2a2e37;"></div>
<div style="left:1860px;top:804px;width:1px;height:150px;background:#2a2e37;"></div>
<div style="left:1875px;top:805px;width:8px;height:116px;background:#3c4049;"></div>
<div style="left:1873px;top:922px;width:12px;height:31px;background:repeating-conic-gradient(#e8e8e8 0 25%, #101010 0 50%) 0 0/2px 2px;"></div>
<div style="left:1873px;top:803px;width:12px;height:1px;background:repeating-linear-gradient(90deg,#e8e8e8 0 1px,transparent 1px 2px)"></div>
<div class="t" style="top:816.46px;font-size:11px;color:#5ea1b3;left:-166.00px;width:600px;text-align:center;">Order ID</div>
<div class="t" style="top:816.46px;font-size:11px;color:#5ea1b3;left:-47.50px;width:600px;text-align:center;">Symbol</div>
<div class="t" style="top:816.46px;font-size:11px;color:#5ea1b3;left:68.00px;width:600px;text-align:center;">Strike Price</div>
<div class="t" style="top:816.46px;font-size:11px;color:#5ea1b3;left:184.00px;width:600px;text-align:center;">Call/Put</div>
<div class="t" style="top:816.46px;font-size:11px;color:#5ea1b3;left:286.00px;width:600px;text-align:center;">Action</div>
<div class="t" style="top:816.46px;font-size:11px;color:#5ea1b3;left:390.00px;width:600px;text-align:center;">Quantity</div>
<div class="t" style="top:816.46px;font-size:11px;color:#5ea1b3;left:601.50px;width:600px;text-align:center;">Limit</div>
<div class="t" style="top:816.46px;font-size:11px;color:#5ea1b3;left:706.50px;width:600px;text-align:center;">Status</div>
<div class="t" style="top:816.46px;font-size:11px;color:#5ea1b3;left:813.00px;width:600px;text-align:center;">Filled</div>
<div class="t" style="top:816.46px;font-size:11px;color:#5ea1b3;left:920.50px;width:600px;text-align:center;">Remaining</div>
<div class="t" style="top:816.46px;font-size:11px;color:#5ea1b3;left:1035.00px;width:600px;text-align:center;">Avg. Fill</div>
<div class="t" style="top:816.46px;font-size:11px;color:#5ea1b3;left:1140.00px;width:600px;text-align:center;">Last Fill</div>
<div class="t" style="top:816.46px;font-size:11px;color:#5ea1b3;left:1258.50px;width:600px;text-align:center;">Rule</div>
<div class="t" style="top:816.46px;font-size:11px;color:#5ea1b3;left:1393.00px;width:600px;text-align:center;">Trigger Time</div>
<div class="t" style="top:816.46px;font-size:11px;color:#5ea1b3;left:1511.00px;width:600px;text-align:center;">Cancel</div>
<div class="t" style="top:816.46px;font-size:11px;color:#5ea1b3;left:501.00px;width:600px;text-align:center;">Order<span style="display:inline-block;width:0;height:0;border-left:4px solid transparent;border-right:4px solid transparent;border-top:7.5px solid #5b9fb4;margin-left:3px;vertical-align:0px"></span></div>
<div class="t" style="top:846.96px;font-size:11px;color:#b4bcc4;left:44.50px;">1</div>
<div class="t" style="top:846.35px;font-size:12.2px;color:#e6e8ea;left:75.00px;">1103206592</div>
<div class="t" style="top:846.35px;font-size:12.2px;color:#e6e8ea;left:207.00px;">AMD</div>
<div class="t" style="top:846.35px;font-size:12.2px;color:#e6e8ea;left:312.00px;">215.0</div>
<div class="t" style="top:846.35px;font-size:12.2px;color:#e6e8ea;left:438.00px;">P</div>
<div class="t" style="top:846.35px;font-size:12.2px;color:#e6e8ea;left:544.00px;">SELL</div>
<div class="t" style="top:846.35px;font-size:12.2px;color:#e6e8ea;left:642.00px;">1.0</div>
<div class="t" style="top:846.35px;font-size:12.2px;color:#e6e8ea;left:752.00px;">MKT</div>
<div class="t" style="top:846.35px;font-size:12.2px;color:#e6e8ea;left:864.00px;">N/A</div>
<div class="t" style="top:846.35px;font-size:12.2px;color:#e6e8ea;left:953.00px;">Filled</div>
<div class="t" style="top:846.35px;font-size:12.2px;color:#e6e8ea;left:1074.00px;">1.0</div>
<div class="t" style="top:846.35px;font-size:12.2px;color:#e6e8ea;left:1166.00px;">0.0</div>
<div class="t" style="top:846.35px;font-size:12.2px;color:#e6e8ea;left:1289.00px;">7.20</div>
<div class="t" style="top:846.35px;font-size:12.2px;color:#e6e8ea;left:1395.00px;">7.20</div>
<div class="t" style="top:846.35px;font-size:12.2px;color:#e6e8ea;left:1499.00px;">SL @ 209.00</div>
<div class="t" style="top:846.35px;font-size:12.2px;color:#e6e8ea;left:1632.00px;">09:50:25</div>
<div class="t" style="top:874.96px;font-size:11px;color:#b4bcc4;left:44.50px;">2</div>
<div class="t" style="top:874.35px;font-size:12.2px;color:#e6e8ea;left:75.00px;">1103206591</div>
<div class="t" style="top:874.35px;font-size:12.2px;color:#e6e8ea;left:207.00px;">UBER</div>
<div class="t" style="top:874.35px;font-size:12.2px;color:#e6e8ea;left:312.00px;">85.0</div>
<div class="t" style="top:874.35px;font-size:12.2px;color:#e6e8ea;left:438.00px;">C</div>
<div class="t" style="top:874.35px;font-size:12.2px;color:#e6e8ea;left:544.00px;">SELL</div>
<div class="t" style="top:874.35px;font-size:12.2px;color:#e6e8ea;left:642.00px;">2.0</div>
<div class="t" style="top:874.35px;font-size:12.2px;color:#e6e8ea;left:752.00px;">MKT</div>
<div class="t" style="top:874.35px;font-size:12.2px;color:#e6e8ea;left:864.00px;">N/A</div>
<div class="t" style="top:874.35px;font-size:12.2px;color:#e6e8ea;left:953.00px;">Filled</div>
<div class="t" style="top:874.35px;font-size:12.2px;color:#e6e8ea;left:1074.00px;">2.0</div>
<div class="t" style="top:874.35px;font-size:12.2px;color:#e6e8ea;left:1166.00px;">0.0</div>
<div class="t" style="top:874.35px;font-size:12.2px;color:#e6e8ea;left:1289.00px;">2.38</div>
<div class="t" style="top:874.35px;font-size:12.2px;color:#e6e8ea;left:1395.00px;">2.38</div>
<div class="t" style="top:874.35px;font-size:12.2px;color:#e6e8ea;left:1499.00px;">SL @ 87.00</div>
<div class="t" style="top:874.35px;font-size:12.2px;color:#e6e8ea;left:1632.00px;">09:48:35</div>
<div class="t" style="top:902.96px;font-size:11px;color:#b4bcc4;left:44.50px;">3</div>
<div class="t" style="top:902.35px;font-size:12.2px;color:#e6e8ea;left:75.00px;">1103206590</div>
<div class="t" style="top:902.35px;font-size:12.2px;color:#e6e8ea;left:207.00px;">UBER</div>
<div class="t" style="top:902.35px;font-size:12.2px;color:#e6e8ea;left:312.00px;">85.0</div>
<div class="t" style="top:902.35px;font-size:12.2px;color:#e6e8ea;left:438.00px;">C</div>
<div class="t" style="top:902.35px;font-size:12.2px;color:#e6e8ea;left:544.00px;">SELL</div>
<div class="t" style="top:902.35px;font-size:12.2px;color:#e6e8ea;left:642.00px;">2.0</div>
<div class="t" style="top:902.35px;font-size:12.2px;color:#e6e8ea;left:752.00px;">MKT</div>
<div class="t" style="top:902.35px;font-size:12.2px;color:#e6e8ea;left:864.00px;">N/A</div>
<div class="t" style="top:902.35px;font-size:12.2px;color:#e6e8ea;left:953.00px;">Filled</div>
<div class="t" style="top:902.35px;font-size:12.2px;color:#e6e8ea;left:1074.00px;">2.0</div>
<div class="t" style="top:902.35px;font-size:12.2px;color:#e6e8ea;left:1166.00px;">0.0</div>
<div class="t" style="top:902.35px;font-size:12.2px;color:#e6e8ea;left:1289.00px;">2.84</div>
<div class="t" style="top:902.35px;font-size:12.2px;color:#e6e8ea;left:1395.00px;">2.84</div>
<div class="t" style="top:902.35px;font-size:12.2px;color:#e6e8ea;left:1499.00px;">TP @ 87.58</div>
<div class="t" style="top:902.35px;font-size:12.2px;color:#e6e8ea;left:1632.00px;">09:32:32</div>
<div class="t" style="top:930.96px;font-size:11px;color:#b4bcc4;left:44.50px;">4</div>
<div class="t" style="top:930.35px;font-size:12.2px;color:#e6e8ea;left:75.00px;">1103206589</div>
<div class="t" style="top:930.35px;font-size:12.2px;color:#e6e8ea;left:207.00px;">UBER</div>
<div class="t" style="top:930.35px;font-size:12.2px;color:#e6e8ea;left:312.00px;">85.0</div>
<div class="t" style="top:930.35px;font-size:12.2px;color:#e6e8ea;left:438.00px;">C</div>
<div class="t" style="top:930.35px;font-size:12.2px;color:#e6e8ea;left:544.00px;">BUY</div>
<div class="t" style="top:930.35px;font-size:12.2px;color:#e6e8ea;left:642.00px;">4.0</div>
<div class="t" style="top:930.35px;font-size:12.2px;color:#e6e8ea;left:752.00px;">MKT</div>
<div class="t" style="top:930.35px;font-size:12.2px;color:#e6e8ea;left:864.00px;">N/A</div>
<div class="t" style="top:930.35px;font-size:12.2px;color:#e6e8ea;left:953.00px;">Filled</div>
<div class="t" style="top:930.35px;font-size:12.2px;color:#e6e8ea;left:1074.00px;">4.0</div>
<div class="t" style="top:930.35px;font-size:12.2px;color:#e6e8ea;left:1166.00px;">0.0</div>
<div class="t" style="top:930.35px;font-size:12.2px;color:#e6e8ea;left:1289.00px;">2.44</div>
<div class="t" style="top:930.35px;font-size:12.2px;color:#e6e8ea;left:1395.00px;">2.63</div>
<div style="left:5px;top:982px;width:1910px;height:30px;background:#1b1f28;border-top:1px solid #2a2e37;"></div>
<div class="t" style="top:994.16px;font-size:11.0px;color:#5fa6be;left:21.00px;">SL order executed: SELL 1 AMD at Mkt</div>
<div style="left:1769px;top:986px;width:146px;height:24px;background:#4e808f;border-radius:11px;"></div>
<div class="t" style="top:994.05px;font-size:11.4px;color:#e8f0f4;left:1542.00px;width:600px;text-align:center;">Connected</div>
<svg style="position:absolute;left:729px;top:446px" width="14" height="21" viewBox="0 0 14 21">
<path d="M1 1 L1 16.5 L4.6 13 L7.2 19 L9.6 18 L7 12.2 L12 12.2 Z" fill="#ffffff" stroke="#000000" stroke-width="1"/></svg>
</body></html>
